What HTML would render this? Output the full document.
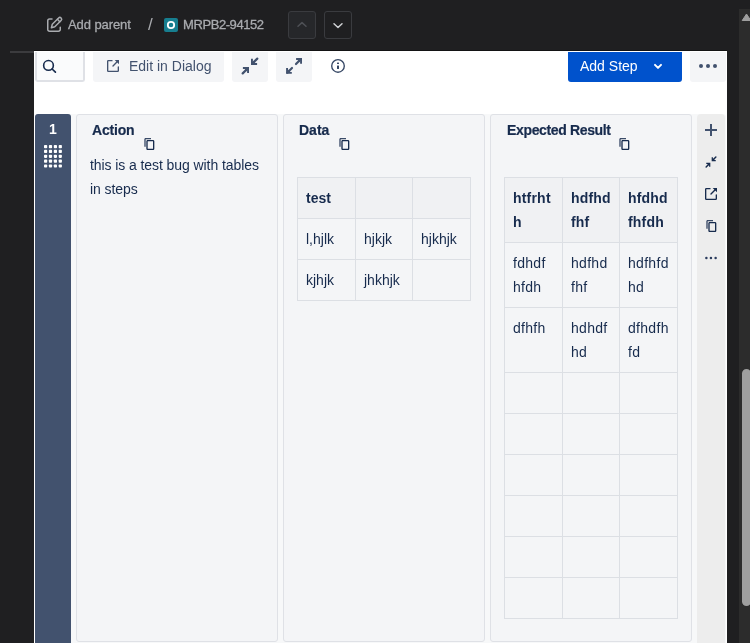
<!DOCTYPE html>
<html lang="en">
<head>
<meta charset="utf-8">
<title>Test Steps</title>
<style>
*{box-sizing:border-box;margin:0;padding:0}
html,body{width:750px;height:643px;overflow:hidden;background:#1f1f21;font-family:"Liberation Sans",sans-serif;}
body{position:relative}
.abs{position:absolute}
.htxt,.ttxt,.ch,.bt,#numt,table{will-change:transform}
#white{left:34px;top:51px;width:693px;height:592px;background:#fff}
#hdr{left:0;top:0;width:739px;height:51px;background:#1f1f21}
#hline{left:10px;top:51px;width:24px;height:2px;background:#3b3b3e}
.htxt{color:#a9abaf;font-size:13px;line-height:16px;white-space:nowrap;-webkit-text-stroke:.3px #a9abaf}
.navb{top:11px;width:28px;height:28px;border:1px solid #3a3b3f;border-radius:3px}
/* toolbar */
.tbtn{top:52px;height:30px;background:#f4f5f7;border-radius:0 0 3px 3px}
.ttxt{color:#42526e;font-size:14px;line-height:16px;white-space:nowrap}
/* scrollbar */
#sb{left:739px;top:9px;width:15px;height:640px;background:#2c2c2c}
#thumb{left:742px;top:369px;width:9px;height:237px;border-radius:5px;background:#9f9f9f}
/* step row */
#rowbg{left:35px;top:114px;width:691px;height:529px;background:#f7f8f9;border-radius:3px 3px 0 0}
#num{left:35px;top:114px;width:36px;height:529px;background:#42526e;border-radius:3px 3px 0 0}
#numt{left:35px;top:121px;width:36px;text-align:center;color:#fff;font-weight:bold;font-size:14px;line-height:16px}
.card{top:114px;width:202px;height:528px;background:#f4f5f7;border:1px solid #dfe1e6;border-radius:3px}
.ch{-webkit-text-stroke:.2px #172b4d;color:#172b4d;font-weight:bold;font-size:14px;line-height:16px;white-space:nowrap}
.bt{color:#172b4d;font-size:14px;line-height:24px;white-space:nowrap}
#acts{left:697px;top:114px;width:28px;height:529px;background:#ededed;border-radius:4px 4px 0 0}
table{border-collapse:collapse;position:absolute;table-layout:fixed}
td,th{border:1px solid #dcdfe4;padding:8px;font-size:14px;line-height:24px;color:#172b4d;text-align:left;vertical-align:top;font-weight:normal;height:41px;white-space:nowrap;overflow:hidden}
th{font-weight:bold;background:#f0f1f3}
#t2 td{letter-spacing:.3px}
#t2 th{letter-spacing:.2px}
</style>
</head>
<body>

<!-- icon defs -->
<svg width="0" height="0" style="position:absolute">
<defs>
<symbol id="i-copy" viewBox="0 0 24 24">
<path fill="currentColor" fill-rule="evenodd" d="M10 19h8V8h-8v11zM8 8c0-1.100.9-2 2-2h8c1.100 0 2 .9 2 2v11c0 1.100-.9 2-2 2h-8c-1.100 0-2-.9-2-2V8z"/>
<path fill="currentColor" d="M5 16V5c0-1.100.9-2 2-2h8v2H7v11H5z" opacity=".85"/>
</symbol>
<symbol id="i-ext" viewBox="0 0 24 24">
<path fill="none" stroke="currentColor" stroke-width="2" stroke-linecap="round" stroke-linejoin="round" d="M10.500 4H5a1 1 0 0 0-1 1v14a1 1 0 0 0 1 1h14a1 1 0 0 0 1-1v-5.500"/>
<path fill="none" stroke="currentColor" stroke-width="2" stroke-linecap="round" d="M12 12l7-7"/>
<path fill="currentColor" d="M14.500 3H21v6.500z"/>
</symbol>
<symbol id="i-collapse" viewBox="0 0 24 24">
<path fill="none" stroke="currentColor" stroke-width="2.200" stroke-linecap="round" d="M14.600 9.300l4.700-4.700M9.400 14.700l-4.700 4.700"/>
<path fill="currentColor" d="M13 4.800h1.900v4.200h4.200v1.900H13zM11 19.100H9.100v-4.200H4.900V13H11z"/>
<path fill="currentColor" d="M14.900 6.500l2.500 2.500h-2.500zM9.100 17.500l-2.500-2.500h2.500z"/>
</symbol>
<symbol id="i-expand" viewBox="0 0 24 24">
<path fill="none" stroke="currentColor" stroke-width="2.200" stroke-linecap="round" d="M18.700 5.300l-4.700 4.700M5.300 18.700l4.700-4.700"/>
<path fill="currentColor" d="M14.100 4.100H20v5.700h-1.900V6h-4zM4.100 14.100H6v3.900h3.800v1.800H4.100z"/>
<path fill="currentColor" d="M15.600 6h2.500v2.500zM6 15.500v2.500h2.500z"/>
</symbol>
</defs>
</svg>
<div id="white" class="abs"></div>

<!-- step row -->
<div id="rowbg" class="abs"></div>
<div id="num" class="abs"></div>
<div id="numt" class="abs">1</div>
<svg class="abs" style="left:44px;top:145px" width="18" height="23" viewBox="0 0 18 23" fill="#fff">
<rect x="0" y="0" width="3.2" height="3.2" rx=".8"/><rect x="4.9" y="0" width="3.2" height="3.2" rx=".8"/><rect x="9.8" y="0" width="3.2" height="3.2" rx=".8"/><rect x="14.7" y="0" width="3.2" height="3.2" rx=".8"/>
<rect x="0" y="4.85" width="3.2" height="3.2" rx=".8"/><rect x="4.9" y="4.85" width="3.2" height="3.2" rx=".8"/><rect x="9.8" y="4.85" width="3.2" height="3.2" rx=".8"/><rect x="14.7" y="4.85" width="3.2" height="3.2" rx=".8"/>
<rect x="0" y="9.7" width="3.2" height="3.2" rx=".8"/><rect x="4.9" y="9.7" width="3.2" height="3.2" rx=".8"/><rect x="9.8" y="9.7" width="3.2" height="3.2" rx=".8"/><rect x="14.7" y="9.7" width="3.2" height="3.2" rx=".8"/>
<rect x="0" y="14.55" width="3.2" height="3.2" rx=".8"/><rect x="4.9" y="14.55" width="3.2" height="3.2" rx=".8"/><rect x="9.8" y="14.55" width="3.2" height="3.2" rx=".8"/><rect x="14.7" y="14.55" width="3.2" height="3.2" rx=".8"/>
<rect x="0" y="19.4" width="3.2" height="3.2" rx=".8"/><rect x="4.9" y="19.4" width="3.2" height="3.2" rx=".8"/><rect x="9.8" y="19.4" width="3.2" height="3.2" rx=".8"/><rect x="14.7" y="19.4" width="3.2" height="3.2" rx=".8"/>
</svg>

<!-- cards -->
<div class="abs card" style="left:76px"></div>
<div class="abs card" style="left:283px"></div>
<div class="abs card" style="left:490px"></div>

<div class="abs ch" id="h1" style="left:92px;top:122px;letter-spacing:-.2px">Action</div>
<div class="abs ch" id="h2" style="left:299px;top:122px">Data</div>
<div class="abs ch" id="h3" style="left:506.500px;top:122px;letter-spacing:-.35px">Expected Result</div>


<svg class="abs" style="left:141px;top:136px;color:#172b4d" width="16" height="16"><use href="#i-copy"/></svg>
<svg class="abs" style="left:336px;top:136px;color:#172b4d" width="16" height="16"><use href="#i-copy"/></svg>
<svg class="abs" style="left:616px;top:136px;color:#172b4d" width="16" height="16"><use href="#i-copy"/></svg>
<div class="abs bt" id="b1" style="left:90.400px;top:153px;letter-spacing:-.08px">this is a test bug with tables</div>
<div class="abs bt" id="b2" style="left:90.400px;top:177px;letter-spacing:-.08px">in steps</div>

<table id="t1" style="left:297px;top:177px;width:174px">
<colgroup><col style="width:58px"><col style="width:57px"><col style="width:58px"></colgroup>
<tr><th>test</th><th></th><th></th></tr>
<tr><td>l,hjlk</td><td>hjkjk</td><td>hjkhjk</td></tr>
<tr><td>kjhjk</td><td>jhkhjk</td><td></td></tr>
</table>

<table id="t2" style="left:504px;top:177px;width:174px">
<colgroup><col style="width:58px"><col style="width:57px"><col style="width:58px"></colgroup>
<tr><th>htfrht<br>h</th><th>hdfhd<br>fhf</th><th>hfdhd<br>fhfdh</th></tr>
<tr><td>fdhdf<br>hfdh</td><td>hdfhd<br>fhf</td><td>hdfhfd<br>hd</td></tr>
<tr><td>dfhfh</td><td>hdhdf<br>hd</td><td>dfhdfh<br>fd</td></tr>
<tr><td></td><td></td><td></td></tr>
<tr><td></td><td></td><td></td></tr>
<tr><td></td><td></td><td></td></tr>
<tr><td></td><td></td><td></td></tr>
<tr><td></td><td></td><td></td></tr>
<tr><td></td><td></td><td></td></tr>
</table>

<div id="acts" class="abs"></div>
<svg class="abs" style="left:704px;top:123px" width="14" height="14" viewBox="0 0 14 14"><path d="M7 1v12M1 7h12" stroke="#42526e" stroke-width="2" fill="none"/></svg>
<svg class="abs" style="left:703px;top:154px;color:#172b4d" width="16" height="16"><use href="#i-collapse"/></svg>
<svg class="abs" style="left:703px;top:186px;color:#172b4d" width="16" height="16"><use href="#i-ext"/></svg>
<svg class="abs" style="left:703px;top:218px;color:#172b4d" width="16" height="16"><use href="#i-copy"/></svg>
<svg class="abs" style="left:703px;top:250px" width="16" height="16" viewBox="0 0 16 16" fill="#2b3c5e"><circle cx="3.400" cy="7.900" r="1.250"/><circle cx="7.950" cy="7.900" r="1.250"/><circle cx="12.600" cy="7.900" r="1.250"/></svg>

<!-- toolbar -->
<div class="abs" id="search" style="left:35px;top:52px;width:50px;height:30px;background:#fafbfc;border:2px solid #dfe1e6;border-top:0;border-radius:0 0 3px 3px"></div>
<div class="abs tbtn" style="left:93px;width:131px"></div>
<div class="abs ttxt" id="eid" style="left:129px;top:58px">Edit in Dialog</div>
<div class="abs tbtn" style="left:232px;width:36px"></div>
<div class="abs tbtn" style="left:276px;width:36px"></div>
<div class="abs tbtn" style="left:568px;width:114px;background:#0052cc"></div>
<div class="abs ttxt" id="adds" style="left:580px;top:58px;color:#fff">Add Step</div>
<div class="abs tbtn" style="left:690px;width:36px"></div>
<svg class="abs" style="left:40px;top:57px" width="18" height="18" viewBox="40 57 18 18"><circle cx="48.500" cy="65.400" r="4.850" fill="none" stroke="#172b4d" stroke-width="1.600"/><path d="M52.100 69l3.300 3.100" stroke="#172b4d" stroke-width="1.700" stroke-linecap="round"/></svg>
<svg class="abs" style="left:105px;top:58px;color:#42526e" width="16" height="16"><use href="#i-ext"/></svg>
<svg class="abs" style="left:238px;top:54px;color:#42526e" width="24" height="24"><use href="#i-collapse"/></svg>
<svg class="abs" style="left:282px;top:54px;color:#42526e" width="24" height="24"><use href="#i-expand"/></svg>
<svg class="abs" style="left:328px;top:56px" width="20" height="20" viewBox="328 56 20 20"><circle cx="338" cy="65.900" r="6.300" fill="none" stroke="#344563" stroke-width="1.350"/><rect x="337" y="62.600" width="2" height="1.500" rx=".5" fill="#344563"/><rect x="337" y="65.600" width="2" height="3.300" rx=".5" fill="#344563"/></svg>
<svg class="abs" style="left:652px;top:60px" width="12" height="12" viewBox="652 60 12 12"><path d="M655 64.900l3 3 3-3" fill="none" stroke="#fff" stroke-width="2" stroke-linecap="round" stroke-linejoin="round"/></svg>
<svg class="abs" style="left:696px;top:60px" width="24" height="12" viewBox="696 60 24 12" fill="#42526e"><circle cx="701" cy="66" r="2"/><circle cx="708" cy="66" r="2"/><circle cx="715" cy="66" r="2"/></svg>

<!-- header -->
<div id="hdr" class="abs"></div>
<div id="hline" class="abs"></div>
<div class="abs" style="left:34px;top:50px;width:693px;height:1px;background:#131314"></div>
<div class="abs htxt" id="ap" style="left:68px;top:17px;letter-spacing:-.08px">Add parent</div>
<div class="abs htxt" id="sl" style="left:148px;top:16px;font-size:17px;line-height:18px;-webkit-text-stroke:0">/</div>
<div class="abs" style="left:164px;top:18px;width:14px;height:14px;border-radius:2px;background:#177e8f"></div>
<div class="abs htxt" id="key" style="left:183px;top:17px;letter-spacing:-.42px">MRPB2-94152</div>
<div class="abs navb" style="left:288px;background:#26272a"></div>
<div class="abs navb" style="left:324px"></div>
<svg class="abs" style="left:44px;top:14px" width="22" height="22" viewBox="44 14 22 22" fill="none" stroke="#a9abaf" stroke-width="1.500" stroke-linecap="round" stroke-linejoin="round"><path d="M52 18.900h-2.500a1.750 1.750 0 0 0-1.750 1.750v8.750a1.750 1.750 0 0 0 1.750 1.750h9a1.750 1.750 0 0 0 1.750-1.750V27.300"/><path d="M51.400 27.700l.9-3.400 6.300-6.300a1.750 1.750 0 0 1 2.500 2.500l-6.300 6.300z"/><path d="M57.400 19.300l2.400 2.400"/></svg>
<svg class="abs" style="left:164px;top:18px" width="14" height="14" viewBox="0 0 14 14"><circle cx="7" cy="7" r="3.200" fill="none" stroke="#fff" stroke-width="1.800"/></svg>
<svg class="abs" style="left:296px;top:20px" width="12" height="10" viewBox="296 20 12 10"><path d="M298 26.300l4-3.700 4 3.700" fill="none" stroke="#4e5055" stroke-width="1.500" stroke-linecap="round" stroke-linejoin="round"/></svg>
<svg class="abs" style="left:332px;top:20px" width="12" height="10" viewBox="332 20 12 10"><path d="M334 23.800l4 3.700 4-3.700" fill="none" stroke="#cfd1d4" stroke-width="1.500" stroke-linecap="round" stroke-linejoin="round"/></svg>

<!-- scrollbar -->
<div id="sb" class="abs"></div>
<div id="thumb" class="abs"></div>
<svg class="abs" style="left:739px;top:9px" width="15" height="15" viewBox="0 0 15 15"><path d="M7.500 5L11.800 11.500H3.200z" fill="#9f9f9f" stroke="#9f9f9f" stroke-width="1" stroke-linejoin="round"/></svg>
</body>
</html>
